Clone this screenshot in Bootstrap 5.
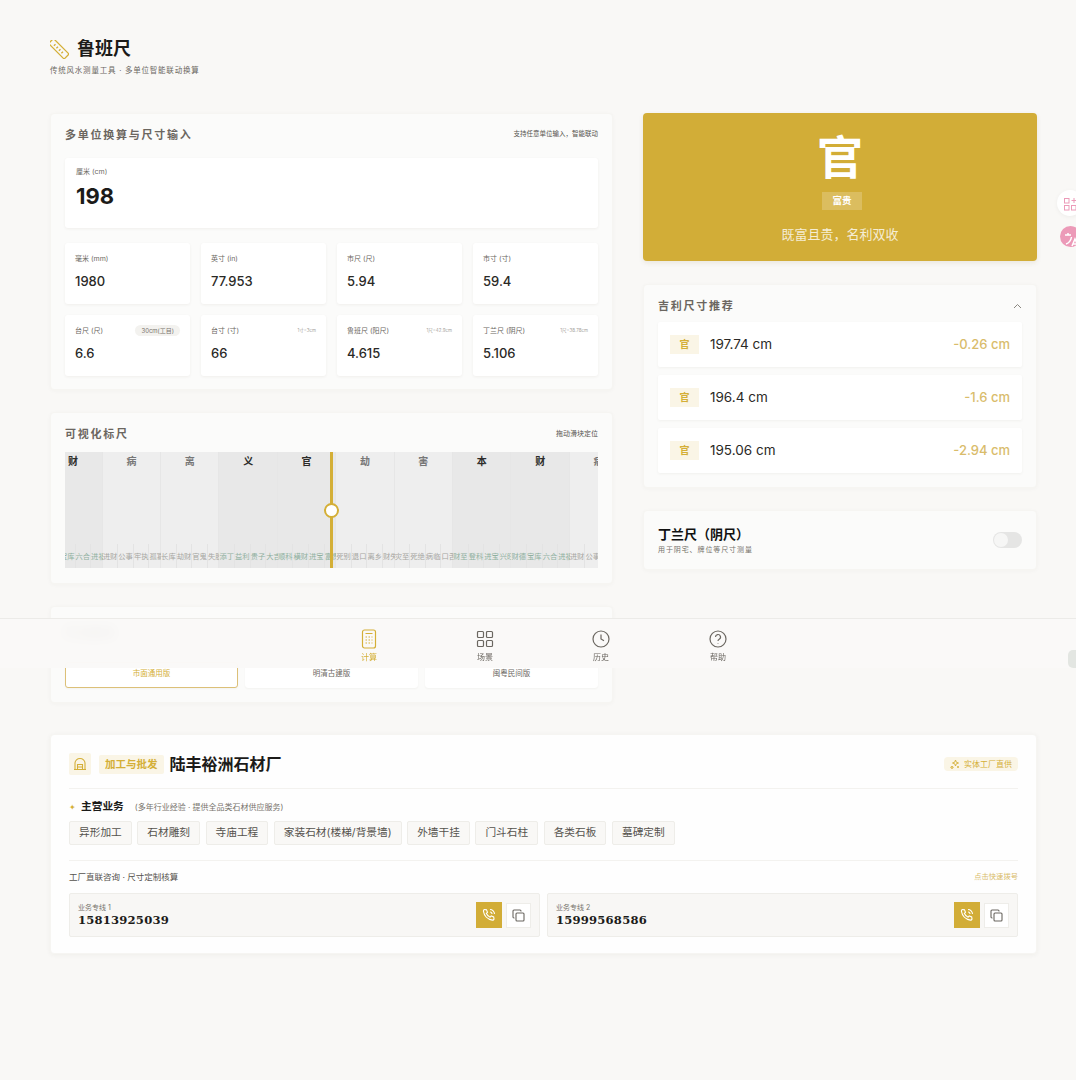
<!DOCTYPE html>
<html lang="zh-CN">

<head>
    <meta charset="UTF-8">
    <meta name="viewport" content="width=device-width, initial-scale=1.0">
    <link href="https://cdn.jsdelivr.net/npm/bootstrap@5.3.2/dist/css/bootstrap.min.css" rel="stylesheet">
    <script src="https://cdn.jsdelivr.net/npm/bootstrap@5.3.2/dist/js/bootstrap.bundle.min.js"></script>
    <title>鲁班尺</title>
    <style>
        html, body {
            height: 1080px;
            overflow: hidden;
        }

        body {
            background-color: #f9f8f6;
            font-family: Inter, "Noto Sans CJK SC", sans-serif;
            color: #1c1b19;
            position: relative;
        }

        .page-wrap {
            padding: 38px 39px 0 50px;
        }

        .top-head {
            height: 75px;
        }

        .top-head h1 {
            font-size: 18px;
            font-weight: 700;
            line-height: 22px;
            margin: 0;
        }

        .top-sub {
            font-size: 7.5px;
            letter-spacing: .78px;
            color: #6b6761;
            line-height: 10px;
            margin-top: 6px;
        }

        .left-col {
            width: 563px;
            flex: none;
        }

        .right-col {
            width: 394px;
            flex: none;
        }

        .panel {
            background: #fbfbfa;
            border: 1px solid #f6f5f2;
            border-radius: 4px;
            box-shadow: 0 1px 4px rgba(60, 50, 20, .03);
            margin-bottom: 22px;
        }

        .panel-title {
            font-size: 11px;
            font-weight: 700;
            letter-spacing: 1.75px;
            color: #6b6660;
            line-height: 16px;
        }

        .panel-note {
            font-size: 6.5px;
            color: #55524d;
        }

        .conv-panel {
            padding: 13px 14px 13px 14px;
        }

        .main-input {
            background: #fff;
            height: 70px;
            margin-top: 15px;
            padding: 8px 11px;
            border-radius: 3px;
            box-shadow: 0 1px 3px rgba(60, 50, 20, .06);
        }

        .unit-label {
            font-size: 7px;
            color: #6b6761;
            line-height: 12px;
        }

        .main-value {
            font-size: 22px;
            font-weight: 700;
            line-height: 26px;
            margin-top: 5px;
        }

        .unit-grid {
            display: grid;
            grid-template-columns: repeat(4, 1fr);
            gap: 11px;
            margin-top: 15px;
        }

        .unit-box {
            background: #fff;
            height: 61px;
            padding: 10px 10px;
            border-radius: 3px;
            box-shadow: 0 1px 3px rgba(60, 50, 20, .06);
        }

        .unit-value {
            font-size: 13px;
            font-weight: 500;
            line-height: 18px;
            margin-top: 7px;
            color: #2a2926;
        }

        .unit-hint {
            font-size: 4.5px;
            color: #a5a29c;
        }

        .unit-pill {
            font-size: 6px;
            color: #77736c;
            background: #f3f2ef;
            border-radius: 6px;
            padding: 1px 6px;
            margin-top: -1px;
        }

        .ruler-panel {
            padding: 13px 14px 15px 14px;
        }

        .ruler {
            height: 116px;
            margin-top: 10px;
            position: relative;
            overflow: hidden;
        }

        .ruler-track {
            display: flex;
            height: 100%;
            margin-left: -20.7px;
        }

        .seg {
            width: 58.4px;
            flex: none;
            height: 100%;
            position: relative;
            background: #eeeeee;
            border-right: 1px solid #e6e6e6;
            text-align: center;
        }

        .seg.good {
            background: #e8e8e8;
        }

        .seg-name {
            font-size: 10px;
            font-weight: 700;
            line-height: 18px;
            color: #777;
        }

        .seg.good .seg-name {
            color: #2d2c2a;
        }

        .seg-subs {
            position: absolute;
            left: 0;
            right: -1px;
            bottom: 0;
            height: 24px;
            display: flex;
        }

        .sub-cell {
            flex: 1;
            border-right: 1px solid #e3e3e3;
            font-size: 7.3px;
            line-height: 9px;
            padding-top: 8px;
            white-space: nowrap;
            color: #a6a6a2;
            overflow: visible;
        }

        .seg.good .sub-cell {
            color: #8fb09f;
        }

        .ruler-line {
            position: absolute;
            left: 265px;
            top: 0;
            bottom: 0;
            width: 3px;
            background: #d4af37;
        }

        .ruler-knob {
            position: absolute;
            left: 259px;
            top: 51px;
            width: 15px;
            height: 15px;
            border-radius: 50%;
            background: #fff;
            border: 2px solid #d4af37;
        }

        .ver-panel {
            height: 97px;
            padding: 18px 14px 0 14px;
            margin-bottom: 31px;
        }

        .ver-btn {
            flex: 1;
            height: 26px;
            margin-top: 21px;
            background: #fff;
            border: 1px solid #fff;
            border-radius: 3px;
            font-size: 7.5px;
            color: #6b6761;
            line-height: 22px;
            text-align: center;
            box-shadow: 0 1px 2px rgba(60, 50, 20, .04);
        }

        .ver-btn.on {
            border-color: #dcc078;
            color: #d4af37;
        }

        .hero-box {
            background: #d2ad37;
            height: 148px;
            border-radius: 4px;
            color: #fff;
            text-align: center;
            margin-bottom: 23px;
            padding-top: 15px;
            box-shadow: 0 2px 5px rgba(120, 90, 20, .1);
        }

        .hero-char {
            font-size: 46px;
            font-weight: 700;
            line-height: 58px;
        }

        .hero-tag {
            display: inline-block;
            background: rgba(255, 255, 255, .2);
            font-size: 9.5px;
            font-weight: 700;
            line-height: 18px;
            width: 40px;
            margin-left: 4px;
        }

        .hero-desc {
            font-size: 13px;
            line-height: 18px;
            margin-top: 15px;
            color: rgba(255, 255, 255, .8);
        }

        .rec-panel {
            padding: 13px 14px 14px 14px;
        }

        .rec-item {
            background: #fff;
            height: 45px;
            padding: 0 12px 0 12px;
            margin-top: 8px;
            border-radius: 2px;
            box-shadow: 0 1px 3px rgba(60, 50, 20, .05);
        }

        .rec-tag {
            width: 29px;
            height: 19px;
            background: #faf5e6;
            color: #d4af37;
            font-size: 10px;
            font-weight: 700;
            line-height: 19px;
            text-align: center;
            margin-right: 11px;
        }

        .rec-size {
            font-size: 13.5px;
            color: #2a2926;
        }

        .rec-diff {
            font-size: 13px;
            font-weight: 500;
            color: #d9bc6b;
            margin-left: auto;
        }

        .toggle-panel {
            height: 60px;
            padding: 0 14px;
        }

        .toggle-title {
            font-size: 13px;
            font-weight: 700;
            line-height: 17px;
            color: #111;
        }

        .toggle-sub {
            font-size: 7px;
            letter-spacing: .9px;
            color: #77736c;
            line-height: 10px;
            margin-top: 2px;
        }

        .toggle-bar {
            width: 29px;
            height: 16px;
            border-radius: 8px;
            background: #e5e5e4;
            position: relative;
        }

        .toggle-bar::after {
            content: "";
            position: absolute;
            left: 1px;
            top: 1px;
            width: 14px;
            height: 14px;
            border-radius: 50%;
            background: #f6f6f5;
        }

        .factory-panel {
            background: #fefefe;
            height: 220px;
            padding: 18px 18px 0 18px;
            margin: 0;
            box-shadow: 0 1px 5px rgba(60, 50, 20, .05);
        }

        .fac-icon {
            width: 22px;
            height: 22px;
            background: #faf5e6;
            border-radius: 2px;
        }

        .fac-tag {
            background: #faf5e6;
            color: #d4af37;
            font-size: 10.5px;
            font-weight: 700;
            line-height: 19px;
            padding: 0 6px;
            margin: 0 6px 0 8px;
            border-radius: 2px;
        }

        .fac-name {
            font-size: 16px;
            font-weight: 700;
            line-height: 22px;
        }

        .fac-badge {
            margin-left: auto;
            background: #faf5e6;
            color: #d4af37;
            font-size: 8px;
            line-height: 14px;
            padding: 0 6px 0 6px;
            border-radius: 4px;
        }

        .fac-line {
            border-top: 1px solid #f3f2ef;
        }

        .biz-dot {
            color: #d4af37;
            font-size: 8px;
            margin-right: 5px;
            line-height: 14px;
        }

        .biz-title {
            font-size: 10.7px;
            font-weight: 700;
            line-height: 14px;
            margin-right: 11px;
        }

        .biz-note {
            font-size: 8px;
            color: #77736c;
        }

        .chip {
            background: #f9f8f6;
            border: 1px solid #eeede9;
            font-size: 10.7px;
            color: #55524d;
            line-height: 22px;
            padding: 0 9px;
            border-radius: 2px;
            white-space: nowrap;
        }

        .tel-title {
            font-size: 8.5px;
            color: #55524d;
        }

        .tel-link {
            font-size: 7.3px;
            color: #d9bc6b;
        }

        .tel-box {
            flex: 1;
            height: 44px;
            background: #f8f7f5;
            border: 1px solid #eeede9;
            border-radius: 2px;
            padding: 0 8px;
        }

        .tel-label {
            font-size: 7px;
            color: #77736c;
            line-height: 10px;
        }

        .tel-num {
            font-family: "DejaVu Serif", "Liberation Serif", serif;
            font-size: 11.6px;
            font-weight: 700;
            letter-spacing: .2px;
            line-height: 15px;
        }

        .call-btn {
            width: 26px;
            height: 26px;
            background: #d2ad37;
            margin-right: 4px;
        }

        .copy-btn {
            width: 25px;
            height: 25px;
            background: #fff;
            border: 1px solid #eeede9;
        }

        .bottom-nav {
            position: absolute;
            left: 0;
            right: 0;
            top: 618px;
            height: 50px;
            background: rgba(250, 249, 247, .93);
            backdrop-filter: blur(6px);
            border-top: 1px solid #ecebe8;
        }

        .nav-tab {
            position: absolute;
            top: 10px;
            width: 40px;
            text-align: center;
            font-size: 8px;
            color: #6b6761;
            line-height: 10px;
        }

        .nav-tab svg {
            display: block;
            margin: 0 auto 3px;
        }

        .nav-tab.on {
            color: #d4af37;
        }

        .float-white {
            position: absolute;
            left: 1057px;
            top: 190px;
            width: 26px;
            height: 26px;
            border-radius: 50%;
            background: #fff;
            box-shadow: 0 1px 4px rgba(0, 0, 0, .05);
        }

        .float-pink {
            position: absolute;
            left: 1060px;
            top: 226px;
            width: 21px;
            height: 21px;
            border-radius: 50%;
            background: #ec9ab8;
        }

        .float-gray {
            position: absolute;
            left: 1068px;
            top: 650px;
            width: 14px;
            height: 18px;
            border-radius: 5px;
            background: #e3e6e2;
        }
    </style>

</head>

<body>

    <div class="page-wrap">
        <header class="top-head">
            <div class="d-flex align-items-center">
                <svg width="19" height="19" viewBox="0 0 19 19" fill="none" stroke="#d4af37" stroke-width="1.3" class="me-2 flex-none">
                    <rect x="-2.5" y="6" width="22" height="7" rx="1" transform="rotate(45 9.5 9.5)" />
                    <path d="M5.5 4.2l-1.6 1.6M8 6.7l-1.6 1.6M10.500 9.200l-1.600 1.600M13 11.700l-1.600 1.600" />
                </svg>
                <h1>鲁班尺</h1>
            </div>
            <div class="top-sub">传统风水测量工具 · 多单位智能联动换算</div>
        </header>

        <div class="d-flex" style="gap:30px">
            <div class="left-col">
                <section class="panel conv-panel">
                    <div class="d-flex justify-content-between align-items-center">
                        <div class="panel-title">多单位换算与尺寸输入</div>
                        <div class="panel-note">支持任意单位输入，智能联动</div>
                    </div>
                    <div class="main-input">
                        <div class="unit-label">厘米 (cm)</div>
                        <div class="main-value">198</div>
                    </div>
                    <div class="unit-grid">
                        <div class="unit-box">
                            <div class="unit-label">毫米 (mm)</div>
                            <div class="unit-value">1980</div>
                        </div>
                        <div class="unit-box">
                            <div class="unit-label">英寸 (in)</div>
                            <div class="unit-value">77.953</div>
                        </div>
                        <div class="unit-box">
                            <div class="unit-label">市尺 (尺)</div>
                            <div class="unit-value">5.94</div>
                        </div>
                        <div class="unit-box">
                            <div class="unit-label">市寸 (寸)</div>
                            <div class="unit-value">59.4</div>
                        </div>
                        <div class="unit-box">
                            <div class="d-flex justify-content-between align-items-center">
                                <div class="unit-label">台尺 (尺)</div><span class="unit-pill">30cm(工目)</span>
                            </div>
                            <div class="unit-value">6.6</div>
                        </div>
                        <div class="unit-box">
                            <div class="d-flex justify-content-between align-items-center">
                                <div class="unit-label">台寸 (寸)</div><span class="unit-hint">1寸=3cm</span>
                            </div>
                            <div class="unit-value">66</div>
                        </div>
                        <div class="unit-box">
                            <div class="d-flex justify-content-between align-items-center">
                                <div class="unit-label">鲁班尺 (阳尺)</div><span class="unit-hint">1尺=42.9cm</span>
                            </div>
                            <div class="unit-value">4.615</div>
                        </div>
                        <div class="unit-box">
                            <div class="d-flex justify-content-between align-items-center">
                                <div class="unit-label">丁兰尺 (阴尺)</div><span class="unit-hint">1尺=38.78cm</span>
                            </div>
                            <div class="unit-value">5.106</div>
                        </div>
                    </div>
                </section>

                <section class="panel ruler-panel">
                    <div class="d-flex justify-content-between align-items-center">
                        <div class="panel-title">可视化标尺</div>
                        <div class="panel-note" style="font-size:7px">拖动滑块定位</div>
                    </div>
                    <div class="ruler">
                        <div class="ruler-track" id="track"></div>
                        <div class="ruler-line"></div>
                        <div class="ruler-knob"></div>
                    </div>
                </section>

                <section class="panel ver-panel">
                    <div class="panel-title">尺法版本</div>
                    <div class="d-flex" style="gap:7px">
                        <div class="ver-btn on">市面通用版</div>
                        <div class="ver-btn">明清古建版</div>
                        <div class="ver-btn">闽粤民间版</div>
                    </div>
                </section>
            </div>

            <div class="right-col">
                <section class="hero-box">
                    <div class="hero-char">官</div>
                    <div class="hero-tag">富贵</div>
                    <div class="hero-desc">既富且贵，名利双收</div>
                </section>

                <section class="panel rec-panel">
                    <div class="d-flex justify-content-between align-items-center mb-1">
                        <div class="panel-title">吉利尺寸推荐</div>
                        <svg width="9" height="6" viewBox="0 0 9 6" fill="none" stroke="#8a8780" stroke-width="1">
                            <path d="M1 5l3.500-3.500L8 5" />
                        </svg>
                    </div>
                    <div class="rec-item d-flex align-items-center">
                        <div class="rec-tag">官</div>
                        <div class="rec-size">197.74 cm</div>
                        <div class="rec-diff">-0.26 cm</div>
                    </div>
                    <div class="rec-item d-flex align-items-center">
                        <div class="rec-tag">官</div>
                        <div class="rec-size">196.4 cm</div>
                        <div class="rec-diff">-1.6 cm</div>
                    </div>
                    <div class="rec-item d-flex align-items-center">
                        <div class="rec-tag">官</div>
                        <div class="rec-size">195.06 cm</div>
                        <div class="rec-diff">-2.94 cm</div>
                    </div>
                </section>

                <section class="panel toggle-panel d-flex justify-content-between align-items-center">
                    <div>
                        <div class="toggle-title">丁兰尺（阴尺）</div>
                        <div class="toggle-sub">用于阴宅、牌位等尺寸测量</div>
                    </div>
                    <div class="toggle-bar"></div>
                </section>
            </div>
        </div>

        <section class="panel factory-panel">
            <div class="d-flex align-items-center" style="height:22px">
                <div class="fac-icon d-flex align-items-center justify-content-center">
                    <svg width="14" height="14" viewBox="0 0 14 14" fill="none" stroke="#d4af37" stroke-width="1.100">
                        <path d="M2 12.500V6a5 4.500 0 0 1 10 0v6.500zM4.500 12.500V7.500h5v5M1 12.500h12M4.500 10h5" />
                    </svg>
                </div>
                <div class="fac-tag">加工与批发</div>
                <div class="fac-name">陆丰裕洲石材厂</div>
                <div class="fac-badge d-flex align-items-center">
                    <svg width="10" height="10" viewBox="0 0 10 10" fill="none" stroke="#d4af37" stroke-width=".9" class="me-1">
                        <path d="M5.500 1l.8 2.200L8.500 4l-2.200.8L5.500 7l-.8-2.200L2.500 4l2.200-.8zM2 7l.4 1 1 .4-1 .4-.4 1-.4-1-1-.4 1-.4zM8 7v2M7 8h2" />
                    </svg>
                    实体工厂直供
                </div>
            </div>
            <div class="fac-line" style="margin-top:13px"></div>
            <div class="d-flex align-items-center" style="margin-top:11px">
                <span class="biz-dot">✦</span>
                <span class="biz-title">主营业务</span>
                <span class="biz-note">(多年行业经验 · 提供全品类石材供应服务)</span>
            </div>
            <div class="d-flex" style="gap:5.500px;margin-top:7px">
                <div class="chip">异形加工</div>
                <div class="chip">石材雕刻</div>
                <div class="chip">寺庙工程</div>
                <div class="chip">家装石材(楼梯/背景墙)</div>
                <div class="chip">外墙干挂</div>
                <div class="chip">门斗石柱</div>
                <div class="chip">各类石板</div>
                <div class="chip">墓碑定制</div>
            </div>
            <div class="fac-line" style="margin-top:15px"></div>
            <div class="d-flex justify-content-between align-items-center" style="margin-top:9px;height:14px">
                <div class="tel-title">工厂直联咨询 · 尺寸定制核算</div>
                <div class="tel-link">点击快速拨号</div>
            </div>
            <div class="d-flex" style="gap:7px;margin-top:9px">
                <div class="tel-box d-flex align-items-center">
                    <div class="me-auto">
                        <div class="tel-label">业务专线 1</div>
                        <div class="tel-num">15813925039</div>
                    </div>
                    <div class="call-btn d-flex align-items-center justify-content-center">
                        <svg width="14" height="14" viewBox="0 0 14 14" fill="none" stroke="#fff" stroke-width="1.100">
                            <path d="M2.500 1.500l2 .3 1 2.500-1.200 1a7 7 0 0 0 3.900 3.900l1-1.200 2.500 1 .3 2c-.2.800-1 1.200-1.700 1.100A10.500 10.500 0 0 1 1.400 3.200c-.1-.7.300-1.500 1.100-1.700zM8 1.500A4.500 4.500 0 0 1 12.500 6M8 4a2 2 0 0 1 2 2" />
                        </svg>
                    </div>
                    <div class="copy-btn d-flex align-items-center justify-content-center">
                        <svg width="13" height="13" viewBox="0 0 13 13" fill="none" stroke="#6b6761" stroke-width="1.100">
                            <rect x="4" y="4" width="8" height="8" rx="1" />
                            <path d="M2.500 9H2a1 1 0 0 1-1-1V2a1 1 0 0 1 1-1h6a1 1 0 0 1 1 1v.5" />
                        </svg>
                    </div>
                </div>
                <div class="tel-box d-flex align-items-center">
                    <div class="me-auto">
                        <div class="tel-label">业务专线 2</div>
                        <div class="tel-num">15999568586</div>
                    </div>
                    <div class="call-btn d-flex align-items-center justify-content-center">
                        <svg width="14" height="14" viewBox="0 0 14 14" fill="none" stroke="#fff" stroke-width="1.100">
                            <path d="M2.500 1.500l2 .3 1 2.500-1.200 1a7 7 0 0 0 3.900 3.900l1-1.200 2.500 1 .3 2c-.2.800-1 1.200-1.700 1.100A10.500 10.500 0 0 1 1.400 3.200c-.1-.7.300-1.500 1.100-1.700zM8 1.500A4.500 4.500 0 0 1 12.500 6M8 4a2 2 0 0 1 2 2" />
                        </svg>
                    </div>
                    <div class="copy-btn d-flex align-items-center justify-content-center">
                        <svg width="13" height="13" viewBox="0 0 13 13" fill="none" stroke="#6b6761" stroke-width="1.100">
                            <rect x="4" y="4" width="8" height="8" rx="1" />
                            <path d="M2.500 9H2a1 1 0 0 1-1-1V2a1 1 0 0 1 1-1h6a1 1 0 0 1 1 1v.5" />
                        </svg>
                    </div>
                </div>
            </div>
        </section>
    </div>

    <nav class="bottom-nav">
        <div class="nav-tab on" style="left:349px">
            <svg width="16" height="20" viewBox="0 0 16 20" fill="none" stroke="#d4af37" stroke-width="1.200">
                <rect x="1.500" y="1" width="13" height="18" rx="2" />
                <path d="M4.500 4.500h7M4.500 8h1.500M7.500 8h1.500M10.500 8h1M4.500 11h1.500M7.500 11h1.500M10.500 11h1M4.500 14h1.500M7.500 14h1.500M10.500 14h1" />
            </svg>
            计算
        </div>
        <div class="nav-tab" style="left:465px">
            <svg width="20" height="20" viewBox="0 0 20 20" fill="none" stroke="#6b6761" stroke-width="1.200">
                <rect x="2.500" y="2.500" width="6" height="6" rx="1" />
                <rect x="11.500" y="2.500" width="6" height="6" rx="1" />
                <rect x="2.500" y="11.500" width="6" height="6" rx="1" />
                <rect x="11.500" y="11.500" width="6" height="6" rx="1" />
            </svg>
            场景
        </div>
        <div class="nav-tab" style="left:581px">
            <svg width="20" height="20" viewBox="0 0 20 20" fill="none" stroke="#6b6761" stroke-width="1.200">
                <circle cx="10" cy="10" r="8" />
                <path d="M10 5.500V10l3 1.800" />
            </svg>
            历史
        </div>
        <div class="nav-tab" style="left:698px">
            <svg width="20" height="20" viewBox="0 0 20 20" fill="none" stroke="#6b6761" stroke-width="1.200">
                <circle cx="10" cy="10" r="8" />
                <path d="M7.500 8a2.500 2.500 0 1 1 3.700 2.200c-.8.500-1.200 1-1.200 1.800M10 14v.6" />
            </svg>
            帮助
        </div>
    </nav>

    <div class="float-white">
        <svg width="26" height="26" viewBox="0 0 26 26" fill="none" stroke="#ec9ab8" stroke-width="1">
            <rect x="7.500" y="7.500" width="4.500" height="4.500" />
            <rect x="7.500" y="14.500" width="4.500" height="4.500" />
            <rect x="14.500" y="14.500" width="4.500" height="4.500" />
            <path d="M17 7v5M14.500 9.500h5" />
        </svg>
    </div>
    <div class="float-pink">
        <svg width="21" height="21" viewBox="0 0 21 21" fill="none" stroke="#fff" stroke-width="1.500">
            <path d="M5 6h6M8 4v2M6 15c3-1 5-4 5.500-7M12 17l3-7 3 7M13 15h4" />
        </svg>
    </div>
    <div class="float-gray"></div>

    <script>
        // ruler data: each segment has four sub-items of two characters
        var segs = [
            ['财', 1, ['财德', '宝库', '六合', '进福']],
            ['病', 0, ['进财', '公事', '牢执', '孤寡']],
            ['离', 0, ['长库', '劫财', '官鬼', '失脱']],
            ['义', 1, ['添丁', '益利', '贵子', '大吉']],
            ['官', 1, ['顺科', '横财', '进宝', '富贵']],
            ['劫', 0, ['死别', '退口', '离乡', '财失']],
            ['害', 0, ['灾至', '死绝', '病临', '口舌']],
            ['本', 1, ['财至', '登科', '进宝', '兴旺']],
            ['财', 1, ['财德', '宝库', '六合', '进福']],
            ['病', 0, ['进财', '公事', '牢执', '孤寡']]
        ];
        var html = '';
        segs.forEach(function (s) {
            html += '<div class="seg' + (s[1] ? ' good' : '') + '"><div class="seg-name">' + s[0] + '</div><div class="seg-subs">';
            s[2].forEach(function (t) {
                html += '<div class="sub-cell">' + t + '</div>';
            });
            html += '</div></div>';
        });
        document.getElementById('track').innerHTML = html;
    </script>

</body>

</html>
